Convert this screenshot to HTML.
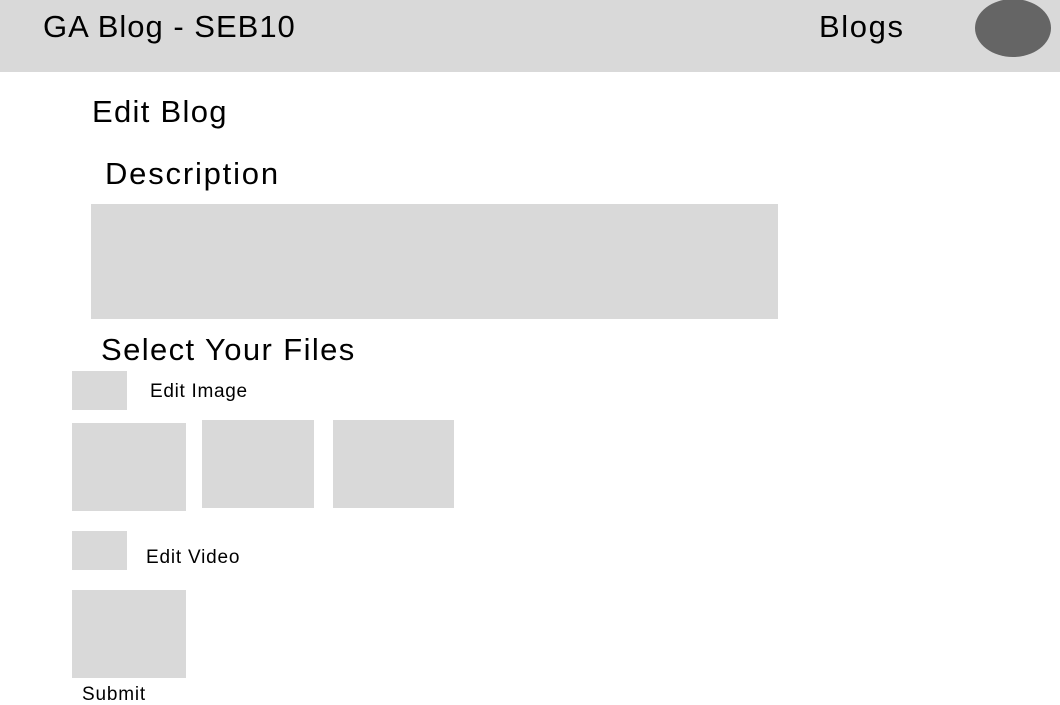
<!DOCTYPE html>
<html><head><style>
body{margin:0;width:1060px;height:703px;background:#fff;position:relative;overflow:hidden;font-family:"Liberation Sans",sans-serif;color:#000}
.a{position:absolute}
.g{position:absolute;background:#d9d9d9}
.t{position:absolute;white-space:nowrap;line-height:1}
</style></head><body>
<div class="g" style="left:0;top:0;width:1060px;height:72px"></div>
<div class="t" style="left:43px;top:11px;font-size:31px;letter-spacing:1px">GA Blog - SEB10</div>
<div class="t" style="left:819px;top:11px;font-size:31px;letter-spacing:1.6px">Blogs</div>
<div class="a" style="left:975px;top:-1px;width:76px;height:58px;border-radius:50%;background:#656565"></div>
<div class="t" style="left:92px;top:96px;font-size:31px;letter-spacing:1.3px">Edit Blog</div>
<div class="t" style="left:105px;top:158px;font-size:31px;letter-spacing:1.8px">Description</div>
<div class="g" style="left:91px;top:204px;width:687px;height:115px"></div>
<div class="t" style="left:101px;top:334px;font-size:31px;letter-spacing:1.4px">Select Your Files</div>
<div class="g" style="left:72px;top:371px;width:55px;height:39px"></div>
<div class="t" style="left:150px;top:382px;font-size:19px;letter-spacing:0.7px">Edit Image</div>
<div class="g" style="left:72px;top:423px;width:114px;height:88px"></div>
<div class="g" style="left:202px;top:420px;width:112px;height:88px"></div>
<div class="g" style="left:333px;top:420px;width:121px;height:88px"></div>
<div class="g" style="left:72px;top:531px;width:55px;height:39px"></div>
<div class="t" style="left:146px;top:548px;font-size:19px;letter-spacing:0.8px">Edit Video</div>
<div class="g" style="left:72px;top:590px;width:114px;height:88px"></div>
<div class="t" style="left:82px;top:685px;font-size:19px;letter-spacing:0.8px">Submit</div>
</body></html>
